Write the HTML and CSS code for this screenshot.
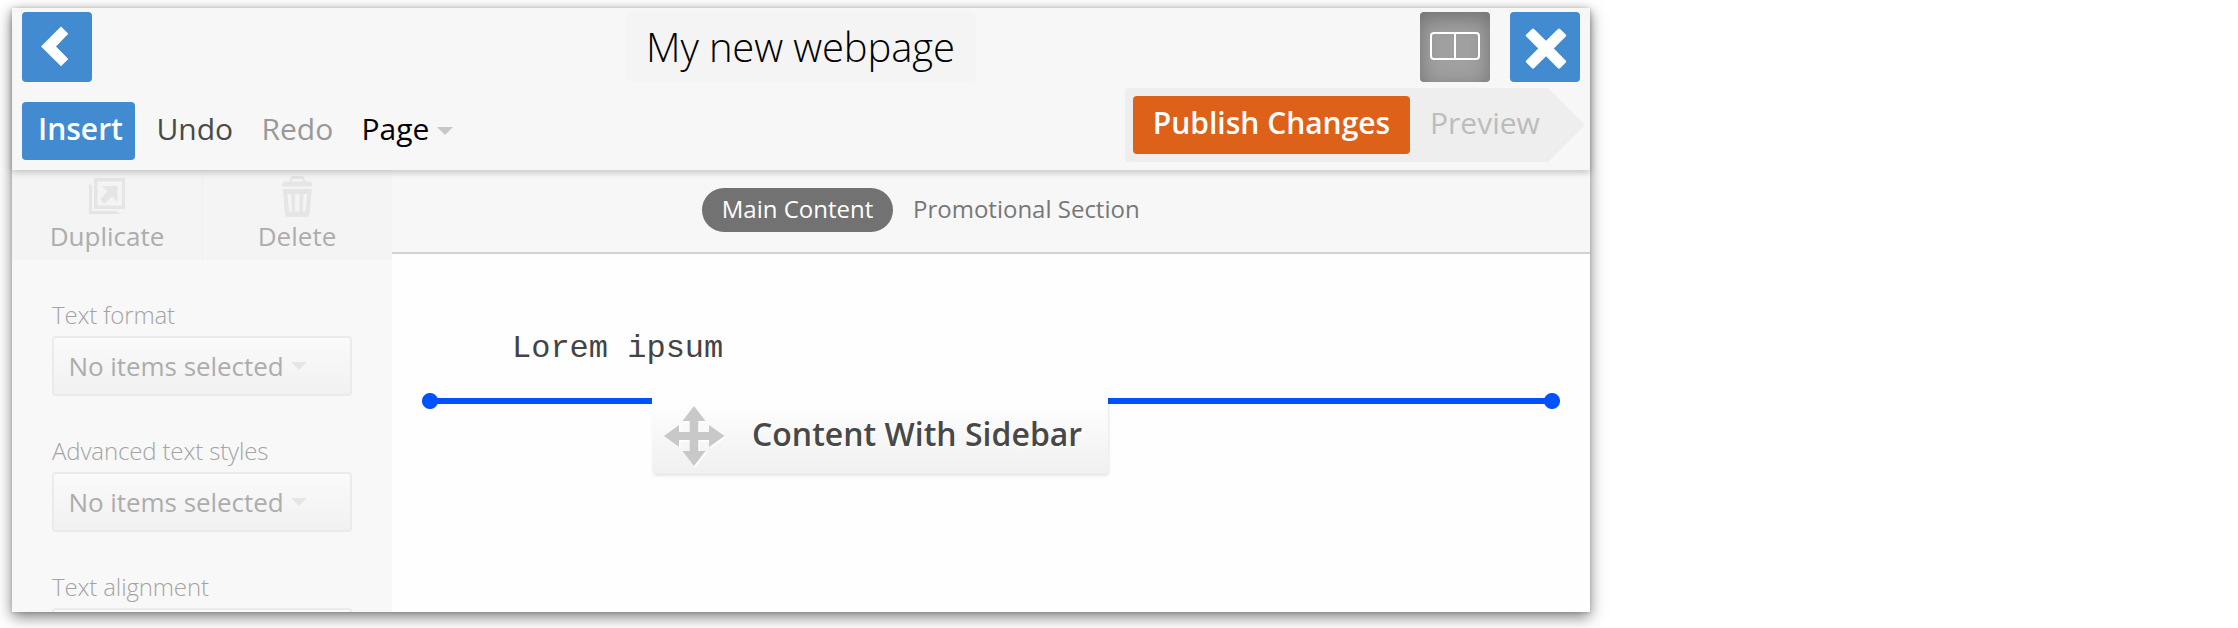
FILE: index.html
```html
<!DOCTYPE html>
<html lang="en">
<head>
<meta charset="utf-8">
<title>My new webpage</title>
<link rel="stylesheet" href="styles.css">
</head>
<body>
<div class="window">
  <header class="header">
    <div class="topbar">
      <button class="square"><svg width="70" height="70" viewBox="0 0 70 70"><path d="M19 34.500 39 14.500 46.300 21.800 34 34.500 46.300 47 39 54.300Z" fill="#fff"/></svg></button>
      <h1 class="title"><span>My new webpage</span></h1>
      <div class="top-actions">
        <button class="square pressed"><svg width="70" height="70" viewBox="0 0 70 70" fill="none" stroke="#fff" stroke-width="2"><rect x="11" y="21" width="48" height="26" rx="3"/><path d="M35 21V47"/></svg></button>
        <button class="square"><svg width="70" height="70" viewBox="0 0 70 70"><path d="M16 22.700 22 17Q23 16 24 17L36 28.700 48 17Q49 16 50 17L56 22.700Q56.500 23.500 56 24.300L43.800 36.500 56 48.700Q56.500 49.500 56 50.300L50 56.300Q49 57 48 56.300L36 44.300 24 56.300Q23 57 22 56.300L16 50.300Q15.500 49.500 16 48.700L28.200 36.500 16 24.300Q15.500 23.500 16 22.700Z" fill="#fff"/></svg></button>
      </div>
    </div>
    <div class="toolbar">
      <nav class="menu">
        <button class="insert">Insert</button>
        <span class="item undo">Undo</span>
        <span class="item redo">Redo</span>
        <span class="item page">Page</span>
        <i class="caret"></i>
      </nav>
      <div class="publish-flow">
        <button class="publish">Publish Changes</button>
        <span class="preview">Preview</span>
      </div>
    </div>
  </header>
  <div class="workspace">
    <aside class="sidebar">
      <div class="tiles">
        <div class="tile duplicate">
          <svg width="36" height="36" viewBox="0 0 36 36"><path d="M5 0H36V31H5ZM8.500 3.500V27.500H33V3.500Z" fill="#e5e5e5" fill-rule="evenodd"/><path d="M0 5 3 8V33H28L31 36H0Z" fill="#e5e5e5"/><path d="M13 8H28.500V24L23 18.500 15.500 25.500 11 21.500 18.500 13.500Z" fill="#e5e5e5"/></svg>
          <span>Duplicate</span>
        </div>
        <div class="tile delete">
          <svg width="31" height="41" viewBox="0 0 31 41"><path d="M7.500 5.500 9 1.500Q9.500 0 11 0H20Q21.500 0 22 1.500L23.500 5.500H27Q30.500 6 30.500 10.500H0Q0 6 4 5.500ZM10 5.500H21L20.500 3H10.500ZM.700 13H29.700L27.500 38Q27 41 24.500 41H6Q3.500 41 3 38ZM5.500 18 7 35.500H10L9.300 18ZM13 18V35.500H17.500V18ZM21.500 18 20.500 35.500H23.500L25.200 18Z" fill="#e5e5e5" fill-rule="evenodd"/></svg>
          <span>Delete</span>
        </div>
      </div>
      <div class="fields">
        <label class="field"><span class="label">Text format</span><span class="select"><span class="value">No items selected</span><i class="caret faint"></i></span></label>
        <label class="field"><span class="label">Advanced text styles</span><span class="select"><span class="value">No items selected</span><i class="caret faint"></i></span></label>
        <label class="field"><span class="label">Text alignment</span><span class="select"></span></label>
      </div>
    </aside>
    <main class="editor">
      <div class="tabs">
        <span class="tab active">Main Content</span>
        <span class="tab">Promotional Section</span>
      </div>
      <div class="canvas">
        <p class="lorem">Lorem ipsum</p>
        <div class="drop-line"></div>
        <div class="drag-card">
          <svg width="64" height="64" viewBox="0 0 64 64"><path d="M32 1 43.500 16H36.300V27H47V20L62.500 31 47 42V35H36.300V46H43.500L32 61 20.500 46H27.700V35H17V42L2 31 17 20V27H27.700V16H20.500Z" fill="#fff" transform="translate(1.500 1.500)"/><path d="M32 1 43.500 16H36.300V27H47V20L62.500 31 47 42V35H36.300V46H43.500L32 61 20.500 46H27.700V35H17V42L2 31 17 20V27H27.700V16H20.500Z" fill="#c8c8c8"/></svg>
          <span>Content With Sidebar</span>
        </div>
      </div>
    </main>
  </div>
</div>
</body>
</html>
```
FILE: styles.css
```css
* { box-sizing: border-box; }
body { margin: 0; height: 628px; overflow: hidden; background: #fff; padding: 8px 12px; font-family: "Open Sans", sans-serif; }
button { border: 0; padding: 0; font: inherit; color: inherit; }
svg { display: block; flex: none; }
.window { width: 1578px; height: 604px; background: #fefefe; box-shadow: 0 5px 14px rgba(0,0,0,.5), 0 1px 3px rgba(0,0,0,.12); display: flex; flex-direction: column; }
.header { height: 162px; flex: none; background: #f7f7f7; box-shadow: 0 2px 7px rgba(0,0,0,.23); position: relative; z-index: 1; }
.topbar { display: grid; grid-template-columns: 604px 350px 1fr; height: 74px; padding: 4px 10px 0; }
.square { width: 70px; height: 70px; border-radius: 4px; background: #428bd0; }
.pressed { background: #a0a0a0; box-shadow: inset 0 6px 20px rgba(0,0,0,.3); }
.title { margin: 0; height: 70px; border-radius: 6px; background: #f4f4f4; font-size: 40px; font-weight: 300; letter-spacing: -.13px; line-height: 70px; padding-left: 20px; color: #000; white-space: nowrap; }
.top-actions { display: flex; justify-content: flex-end; gap: 20px; }
.toolbar { display: flex; justify-content: space-between; padding: 6px 5px 0 10px; height: 88px; font-size: 30px; }
.menu { display: flex; align-items: center; height: 58px; margin-top: 14px; white-space: nowrap; }
.insert { width: 113px; height: 58px; border-radius: 4px; background: #428bd0; color: #fff; font-weight: 600; line-height: 54px; padding: 0 0 4px 4px; }
.item { line-height: 54px; height: 58px; }
.undo { margin-left: 21.5px; width: 105px; color: #4a4a4a; }
.redo { width: 100px; color: #999; }
.page { width: 75.5px; color: #000; }
.caret { width: 16px; height: 8px; background: #c8c8c8; clip-path: polygon(0 0, 100% 0, 50% 100%); }
.publish-flow { width: 460px; height: 74px; padding: 8px; display: flex; background: #eee; border-radius: 4px; clip-path: polygon(0 0, 423px 0, 100% 50%, 423px 100%, 0 100%); white-space: nowrap; }
.publish { width: 277px; height: 58px; border-radius: 4px; background: #dd6119; color: #fff; font-weight: 600; line-height: 54px; padding-bottom: 4px; }
.preview { margin-left: 20px; line-height: 54px; color: #bcbcbc; }
.workspace { flex: 1; min-height: 0; display: flex; overflow: hidden; }
.sidebar { width: 380px; background: #f8f8f8; }
.tiles { height: 90px; display: flex; background: #f4f4f4; }
.tile { display: flex; flex-direction: column; align-items: center; font-size: 26px; line-height: 36px; color: #adadad; }
.duplicate { width: 191px; border-right: 1px solid #efefef; padding-top: 8px; }
.duplicate span { margin-top: 4px; }
.delete { padding-top: 6px; width: 188px; }
.delete span { margin-top: 1px; }
.fields { padding: 36px 40px 0; }
.field { display: block; height: 136px; }
.label { display: block; height: 40px; font-size: 24px; font-weight: 300; letter-spacing: -.14px; line-height: 38px; color: #a4a4a4; white-space: nowrap; }
.select { display: flex; align-items: center; width: 300px; height: 60px; border: 2px solid #ebebeb; border-radius: 4px; background: linear-gradient(#fafafa, #f1f1f1); padding-left: 14.5px; font-size: 26px; letter-spacing: -.05px; color: #adadad; white-space: nowrap; }
.value { width: 222.5px; }
.faint { background: #e5e5e5; }
.editor { width: 1198px; display: flex; flex-direction: column; }
.tabs { height: 84px; flex: none; display: flex; padding: 18px 0 0 310px; background: #f7f7f7; border-bottom: 2px solid #d2d2d2; font-size: 24px; line-height: 42px; color: #777; white-space: nowrap; }
.tab.active { width: 191px; height: 44px; margin-right: 20px; border-radius: 22px; background: #727272; color: #fff; text-align: center; }
.canvas { position: relative; flex: 1; }
.lorem { margin: 0; padding: 77px 0 0 120px; font: 32px/36px "Liberation Mono", monospace; color: #444; }
.drop-line { margin: 26px 30px 0; height: 16px; background: radial-gradient(circle at 8px 8px, #0052ff 7.5px, transparent 8.5px), radial-gradient(circle at calc(100% - 8px) 8px, #0052ff 7.5px, transparent 8.5px), linear-gradient(transparent 5px, #0052ff 5.5px, #0052ff 10.500px, transparent 11px) 8px 0 / calc(100% - 16px) 16px no-repeat; }
.drag-card { position: absolute; left: 260px; top: 141px; width: 456px; height: 79px; display: flex; align-items: center; padding: 4px 0 0 10px; gap: 26px; border-radius: 4px; background: linear-gradient(#fefefe 10%, #f0f0f0); box-shadow: 1px 2px 3px rgba(0,0,0,.1); font-size: 32px; font-weight: 600; line-height: 44px; color: #484848; text-shadow: 1px 2px 0 #fff; white-space: nowrap; }
.drag-card span { margin-bottom: 5px; }
```
